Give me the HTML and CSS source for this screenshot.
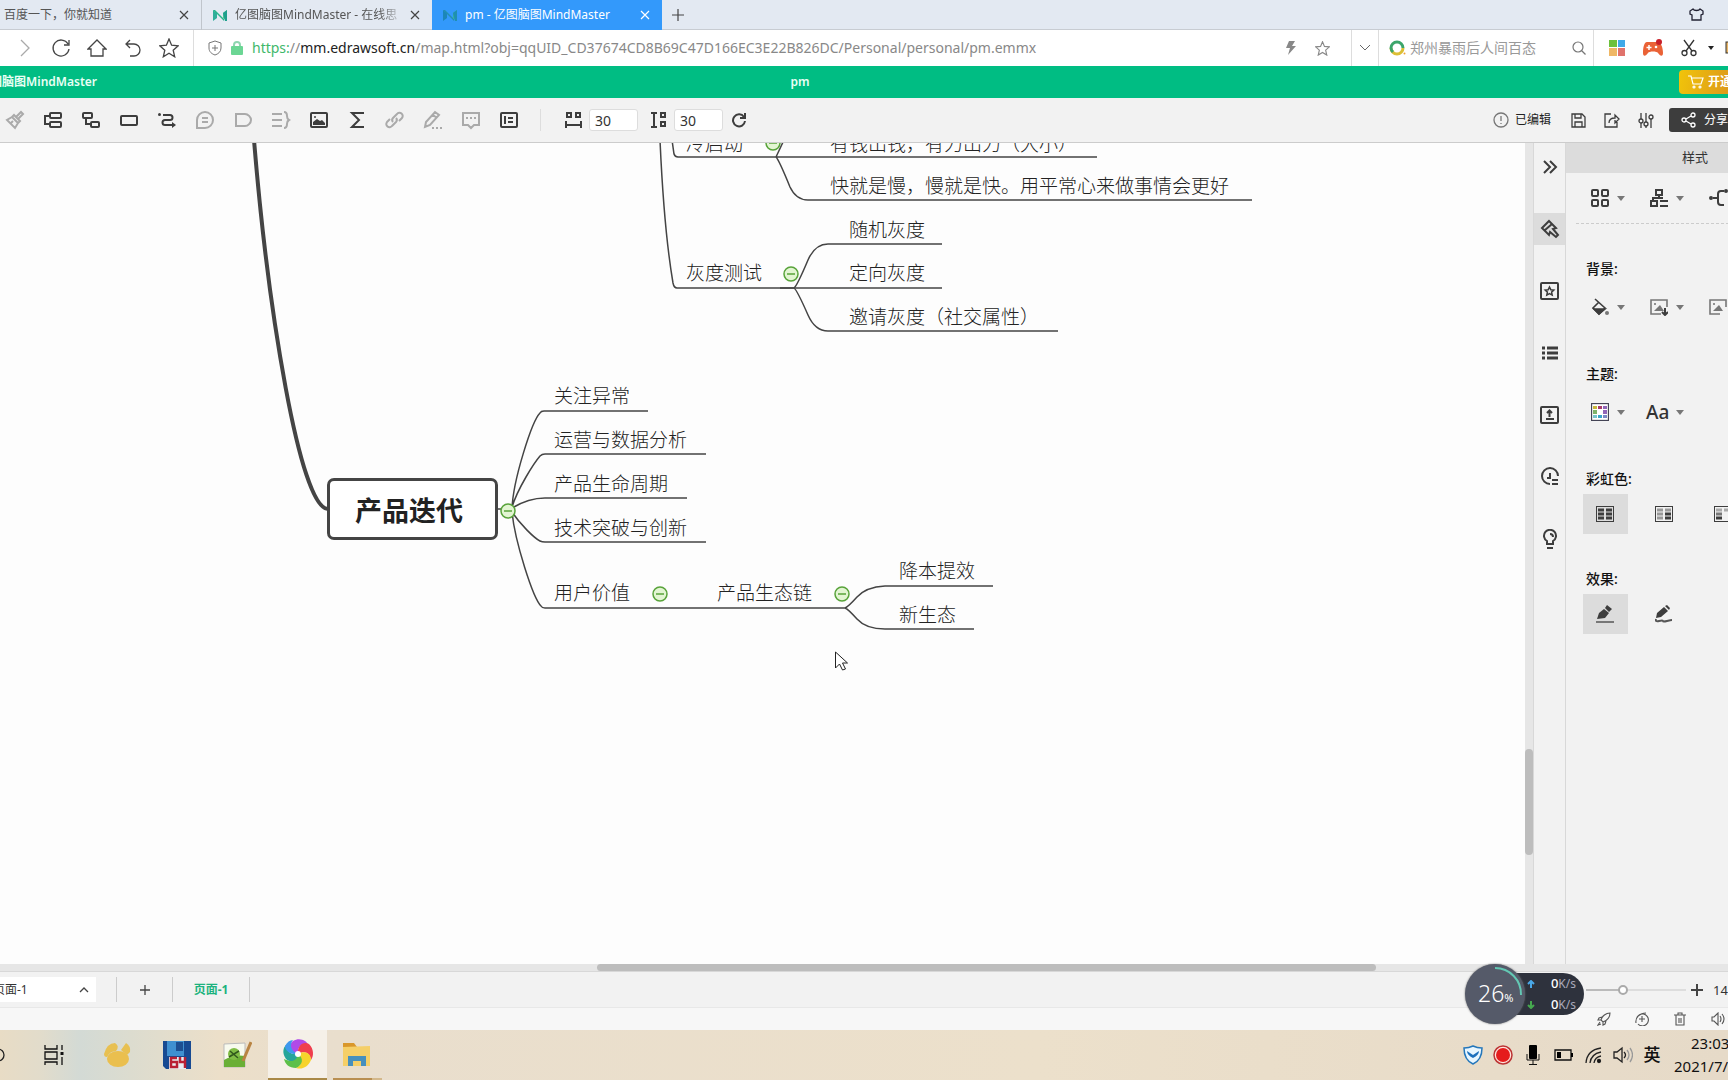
FILE: index.html
```html
<!DOCTYPE html>
<html lang="zh-CN">
<head>
<meta charset="utf-8">
<title>pm - 亿图脑图MindMaster</title>
<link rel="stylesheet" href="styles.css">
</head>
<body>
<div class="app">
  <nav class="tabs" aria-label="标签页">
    <div class="tab tab-first"><a href="#baidu">百度一下，你就知道</a><button class="close" aria-label="关闭"><svg width="10" height="10"><path d="M1 1l8 8M9 1l-8 8"/></svg></button></div>
    <div class="tab"><svg class="logo" width="14" height="13" viewBox="0 0 14 13"><path d="M0 1l4 3v5l-4 3z" fill="#2fae9a"/><path d="M0 1h2l9 9v2z" fill="#25b58a"/><path d="M14 1l-4 3v5l4 3z" fill="#4cc98f"/><path d="M10 4l4-3v11h-2z" fill="#1f9f8d"/></svg><a class="fade" href="#mm">亿图脑图MindMaster - 在线思</a><button class="close" aria-label="关闭"><svg width="10" height="10"><path d="M1 1l8 8M9 1l-8 8"/></svg></button></div>
    <div class="tab active"><svg class="logo" width="14" height="13" viewBox="0 0 14 13"><path d="M0 1l4 3v5l-4 3z" fill="#1c86b8"/><path d="M0 1h2l9 9v2z" fill="#2390b0"/><path d="M14 1l-4 3v5l4 3z" fill="#35b49a"/><path d="M10 4l4-3v11h-2z" fill="#1f8fb0"/></svg><a href="#pm">pm - 亿图脑图MindMaster</a><button class="close" aria-label="关闭"><svg width="10" height="10"><path d="M1 1l8 8M9 1l-8 8"/></svg></button></div>
    <button class="newtab" aria-label="新标签页"><svg width="14" height="14"><path d="M7 1v12M1 7h12"/></svg></button>
    <button class="skin" aria-label="皮肤"><svg width="15" height="13"><path d="M4 1L1 3v3l2 1v5h9V7l2-1V3l-3-2c-1 2-6 2-7 0z" fill="none" stroke="#223" stroke-width="1.3"/></svg></button>
  </nav>

  <div class="address">
    <div class="navs">
      <button aria-label="前进"><svg width="18" height="18"><path d="M5 1l8 8-8 8"/></svg></button>
      <button aria-label="刷新"><svg width="20" height="20"><path d="M17 6a8 8 0 1 0 1 5M18 2v5h-5"/></svg></button>
      <button aria-label="主页"><svg width="20" height="20"><path d="M1 11l9-9 9 9h-3v7H4v-7z"/></svg></button>
      <button aria-label="恢复"><svg width="18" height="20"><path d="M6 2L2 6l4 4M2 6h8a6 6 0 0 1 0 12H6"/></svg></button>
      <button aria-label="收藏"><svg width="20" height="20"><path d="M10 1l2.600 6.200 6.600.600-5 4.400 1.500 6.600L10 15.300l-5.700 3.500 1.500-6.600-5-4.400 6.600-.600z"/></svg></button>
    </div>
    <div class="urlbox">
      <svg width="14" height="16" fill="none" stroke="#777"><path d="M7 1l6 2v5c0 4-3 6-6 7-3-1-6-3-6-7V3zM7 5v6M4 8h6"/></svg>
      <svg width="12" height="14"><path d="M3 6V4a3 3 0 0 1 6 0v2" fill="none" stroke="#8fd6b0" stroke-width="2"/><rect y="5" width="12" height="9" rx="1" fill="#6bd694"/></svg>
      <div class="url" role="textbox" aria-label="地址" contenteditable="true" spellcheck="false"><span class="scheme">https:</span>//<b>mm.edrawsoft.cn</b>/map.html?obj=qqUID_CD37674CD8B69C47D166EC3E22B826DC/Personal/personal/pm.emmx</div>
      <svg width="10" height="14" fill="#888"><path d="M3 0h6L6 5h4L2 14l2-7H0z"/></svg>
      <svg width="15" height="15" viewBox="0 0 20 20" fill="none" stroke="#888" stroke-width="1.500"><path d="M10 1l2.600 6.200 6.600.600-5 4.400 1.500 6.600L10 15.300l-5.700 3.500 1.500-6.600-5-4.400 6.600-.600z"/></svg>
    </div>
    <button class="drop" aria-label="展开"><svg width="12" height="8" fill="none" stroke="#666"><path d="M1 1l5 5 5-5"/></svg></button>
    <label class="search"><svg width="17" height="16" fill="none" stroke-width="3"><path d="M2 8a6 6 0 0 1 12 0" stroke="#3ba56a"/><path d="M2 8a6 6 0 0 0 12 0" stroke="#dcbf35"/><path d="M2 8a6 6 0 0 0 2 4" stroke="#3ba56a"/><circle cx="15.500" cy="13.500" r="1" fill="#f0a030" stroke="none"/></svg><input type="text" placeholder="郑州暴雨后人间百态" aria-label="搜索"><svg width="14" height="14" fill="none" stroke="#777" stroke-width="1.200"><circle cx="6" cy="6" r="5"/><path d="M9.500 9.500l4 4"/></svg></label>
    <div class="plugins">
      <button aria-label="应用"><svg width="16" height="16"><path fill="#6cc13c" d="M0 0h8v7H0z"/><path fill="#3fa9e8" d="M9 0h7v7H9z"/><path fill="#efb765" d="M0 8h8v8H0z"/><path fill="#e0736c" d="M9 8h7v8H9z"/></svg></button>
      <button aria-label="游戏"><svg width="20" height="18"><path d="M4 3h11c3 0 5 6 5 11 0 4-3 3-5 0-1-2-9-2-10 0-2 3-5 4-5 0C0 9 1 3 4 3z" fill="#ea6236"/><circle cx="16" cy="3" r="3" fill="#c8202a"/><path d="M6 6v5M3.500 8.500h5" stroke="#fff" stroke-width="1.500"/><circle cx="13" cy="8" r="1.300" fill="#fff"/></svg></button>
      <button aria-label="截图"><svg width="16" height="18" fill="none" stroke="#333" stroke-width="1.300"><circle cx="3.500" cy="14" r="2.500"/><circle cx="12.500" cy="14" r="2.500"/><path d="M3 1l8 11M13 1L5 12"/></svg></button>
      <svg class="tri" width="6" height="4"><path d="M0 0h6L3 4z" fill="#222"/></svg>
      <svg class="cut" width="8" height="14"><rect x="1" y="1" width="12" height="11" fill="#eab768" stroke="#333"/></svg>
    </div>
  </div>

  <header class="brand">
    <span class="product">亿图脑图MindMaster</span>
    <h1>pm</h1>
    <button class="vip"><svg width="16" height="14" fill="none" stroke="#fff" stroke-width="1.200"><path d="M0 1h3l2 8h8l2-6H4"/><circle cx="6" cy="12" r="1"/><circle cx="12" cy="12" r="1"/></svg>开通</button>
  </header>

  <div class="toolbar">
    <div class="tools">
      <button class="dim" aria-label="格式刷"><svg width="20" height="20"><path d="M11 7l5-5 2 2-5 5M9 5l6 6-2 2-6-6zM7 7l-5 3 8 8 3-5M6 13l2-2"/></svg></button>
      <button aria-label="同级主题"><svg width="20" height="20"><rect x="7" y="3" width="11" height="5" rx="1"/><rect x="7" y="12" width="11" height="5" rx="1"/><path d="M7 6H2v8h5"/></svg></button>
      <button aria-label="子主题"><svg width="20" height="20"><rect x="2" y="3" width="9" height="5" rx="1"/><rect x="10" y="12" width="8" height="5" rx="1"/><path d="M5 8v6h5"/></svg></button>
      <button aria-label="浮动主题"><svg width="20" height="20"><rect x="2" y="6" width="16" height="9" rx="1"/></svg></button>
      <button aria-label="关系线"><svg width="20" height="20"><path d="M6 5h7a2.500 2.500 0 0 1 0 5H8a2.500 2.500 0 0 0 0 5h7"/><circle cx="2.500" cy="4.500" r="1.500" fill="#3d3d3d" stroke="none"/><path d="M15 12l4 3-4 3z" fill="#3d3d3d" stroke="none"/></svg></button>
      <button class="dim" aria-label="注释"><svg width="20" height="20"><path d="M2 18V10a8 8 0 1 1 8 8zM7 8h6M7 12h6"/></svg></button>
      <button class="dim" aria-label="外框"><svg width="20" height="20"><path d="M3 4h9c3 0 6 3 6 6s-3 6-6 6H3z"/></svg></button>
      <button class="dim" aria-label="概要"><svg width="20" height="20"><path d="M1 4h10M1 10h10M1 16h10M13 2c3 0 3 2 3 4s0 3 2 4c-2 1-2 2-2 4s0 4-3 4"/></svg></button>
      <button aria-label="图片"><svg width="20" height="20"><rect x="2" y="3" width="16" height="14" rx="1"/><path d="M4 15v-3l4-3 3 2 2-1 3 3v2z" fill="#3d3d3d" stroke="none"/><circle cx="6" cy="7" r="1" fill="#3d3d3d" stroke="none"/></svg></button>
      <button aria-label="公式"><svg width="20" height="20"><path d="M17 3H5l7 7-7 7h12"/></svg></button>
      <button class="dim" aria-label="链接"><svg width="20" height="20"><path d="M8 12a3 3 0 0 1 0-4l4-4a3 3 0 0 1 5 4l-3 3M11 8a3 3 0 0 1 0 4l-4 4a3 3 0 0 1-5-4l3-3"/></svg></button>
      <button class="dim" aria-label="编辑"><svg width="20" height="20"><path d="M2 17l1-5 9-10 4 3-9 10zM10 5l4 3M9 18h2M13 18h2M17 18h2"/></svg></button>
      <button class="dim" aria-label="评论"><svg width="20" height="20"><path d="M2 3h16v12h-5l-3 3-3-3H2zM5 8h2M9 8h2M13 8h2"/></svg></button>
      <button aria-label="任务"><svg width="20" height="20"><rect x="2" y="3" width="16" height="14" rx="1"/><path d="M6 6v8M9 8h5M9 12h5"/></svg></button>
    </div>
    <div class="spacing">
      <label><svg width="18" height="18"><path d="M2 2h4v4H2zM11 2h4v4h-4zM1 10v7M16 10v7M1 14h15"/></svg><input type="text" value="30" aria-label="水平间距"></label>
      <label><svg width="18" height="18"><path d="M1 2h6M1 16h6M4 2v14M11 2h4v4h-4zM11 11h4v4h-4z"/></svg><input type="text" value="30" aria-label="垂直间距"></label>
      <button aria-label="重置"><svg width="16" height="16"><path d="M13 5a6 6 0 1 0 1 4M14 1v5H9"/></svg></button>
    </div>
    <div class="actions">
      <span class="edited"><svg width="16" height="16"><circle cx="8" cy="8" r="7"/><path d="M8 4v5M8 11v1"/></svg>已编辑</span>
      <button aria-label="保存"><svg width="15" height="15"><path d="M1 1h10l3 3v10H1zM4 1v4h6V1M4 14V9h7v5"/></svg></button>
      <button aria-label="导出"><svg width="16" height="15"><path d="M7 1H1v13h12V9M5 10c0-4 3-5 6-5V2l4 4-4 4V7"/></svg></button>
      <button aria-label="设置"><svg width="16" height="15"><path d="M3 0v6M3 10v5M8 0v9M8 13v2M13 6v9"/><circle cx="3" cy="8" r="2"/><circle cx="8" cy="11" r="2"/><circle cx="13" cy="4" r="2"/></svg></button>
      <button class="share"><svg width="16" height="16"><circle cx="3" cy="8" r="2"/><circle cx="12" cy="3" r="2"/><circle cx="12" cy="13" r="2"/><path d="M5 7l5-3M5 9l5 3"/></svg>分享</button>
    </div>
  </div>

  <main class="work">
    <section class="canvas" aria-label="思维导图">
      <svg class="links" width="1400" height="800" viewBox="0 143 1400 800">
        <g fill="none" stroke="#444" stroke-width="1.500">
          <path d="M254 140C268 310 300 509 328 509" stroke-width="4"/>
          <path d="M660 140Q664 230 673 283Q674 288 677 288H942M672 140L674 154Q675 157 678 157H1097M784 140L776 157Q779 160 790 187Q796 200 808 200H1252"/>
          <path d="M780 288H794Q797 286 808 260Q815 244 828 244H942M794 288Q797 290 808 315Q815 331 828 331H1058"/>
          <path d="M497 509H512C513 480 532 421 540 413Q541 411 544 411H648M512 507C518 488 534 463 540 456Q542 454 545 454H706M512 508C522 502 535 498 545 498H687M512 512C520 524 534 538 540 541Q542 542 545 542H706M512 512C515 542 533 598 541 606Q542 608 545 608H845M830 608H845Q848 607 857 597T885 586H993M845 608Q848 609 857 619T885 629H974"/>
        </g>
        <g fill="#e2f5d2" stroke="#58a33a" stroke-width="1.500">
          <circle cx="773" cy="143" r="7"/><path d="M769 143h8"/>
          <circle cx="791" cy="274" r="7"/><path d="M787 274h8"/>
          <circle cx="508" cy="511" r="7"/><path d="M504 511h8"/>
          <circle cx="660" cy="594" r="7"/><path d="M656 594h8"/>
          <circle cx="842" cy="594" r="7"/><path d="M838 594h8"/>
        </g>
        <path d="M835.500 652v16l4-4 3 6 3-1-3-6h5z" fill="#fff" stroke="#222"/>
      </svg>
      <div class="node" style="left:686px;top:-14px">冷启动</div>
      <div class="node" style="left:830px;top:-14px">有钱出钱，有力出力（大小）</div>
      <div class="node" style="left:830px;top:28px">快就是慢，慢就是快。用平常心来做事情会更好</div>
      <div class="node" style="left:849px;top:72px">随机灰度</div>
      <div class="node" style="left:686px;top:115px">灰度测试</div>
      <div class="node" style="left:849px;top:115px">定向灰度</div>
      <div class="node" style="left:849px;top:159px">邀请灰度（社交属性）</div>
      <div class="topic" style="left:327px;top:335px">产品迭代</div>
      <div class="node" style="left:554px;top:238px">关注异常</div>
      <div class="node" style="left:554px;top:282px">运营与数据分析</div>
      <div class="node" style="left:554px;top:326px">产品生命周期</div>
      <div class="node" style="left:554px;top:370px">技术突破与创新</div>
      <div class="node" style="left:554px;top:435px">用户价值</div>
      <div class="node" style="left:717px;top:435px">产品生态链</div>
      <div class="node" style="left:899px;top:413px">降本提效</div>
      <div class="node" style="left:899px;top:457px">新生态</div>
    </section>
    <div class="vscroll"><div class="thumb"></div></div>
    <nav class="rail" aria-label="面板">
      <button aria-label="收起"><svg width="18" height="16"><path d="M3 2l6 6-6 6M9 2l6 6-6 6"/></svg></button>
      <button class="on" aria-label="样式"><svg width="20" height="20"><path d="M9 2l7 7-3 1 5 6-2 2-6-5-1 3-7-7zM5 11l7-6"/></svg></button>
      <button aria-label="图标"><svg width="20" height="20"><rect x="1" y="2" width="17" height="16" rx="1"/><path d="M9.500 6l1.300 2.700 3 .400-2.200 2 .600 3-2.700-1.500-2.700 1.500.600-3-2.200-2 3-.400z" stroke-width="1.500"/></svg></button>
      <button aria-label="大纲"><svg class="bold" width="18" height="16"><path d="M1 3h3M1 8h3M1 13h3M6 3h11M6 8h11M6 13h11"/></svg></button>
      <button aria-label="附件"><svg width="20" height="20"><rect x="1" y="2" width="17" height="16" rx="1"/><path d="M9.500 12V6M7 8l2.500-2.500L12 8M6 14h8"/></svg></button>
      <button aria-label="历史"><svg width="20" height="20"><path d="M10 17a8 8 0 1 1 8-8M10 6v5H7M12 13h6M12 17h6"/></svg></button>
      <button aria-label="提示"><svg width="18" height="20"><path d="M6 15v-3a6 6 0 1 1 6 0v3zM6 19h6M9 5q3 0 3 3"/></svg></button>
    </nav>
    <aside class="panel">
      <h2>样式</h2>
      <div class="layouts row">
        <button aria-label="布局"><svg width="18" height="18"><rect x="1" y="1" width="6" height="6" rx="1"/><rect x="11" y="1" width="6" height="6" rx="1"/><rect x="1" y="11" width="6" height="6" rx="1"/><rect x="11" y="11" width="6" height="6" rx="1"/></svg><i></i></button>
        <button aria-label="结构"><svg width="18" height="18"><path d="M6 1h6v5H6zM9 6v3M3 13V9h10M1 12h6v5H1zM10 12h8M10 17h8"/></svg><i></i></button>
        <button aria-label="连线"><svg width="20" height="18"><path d="M4 9h5M15 2h-3q-3 0-3 3v8q0 3 3 3h3"/><circle cx="2" cy="9" r="1"/><circle cx="17" cy="2" r="1"/></svg></button>
      </div>
      <section><h3>背景:</h3><div class="row">
        <button aria-label="背景颜色"><svg class="thin" width="18" height="18"><path d="M4 1l10 9-6 6-6-6 6-6"/><path d="M3 11h11l-6 5z" fill="#3d3d3d"/><circle cx="16" cy="15" r="2" fill="#777" stroke="none"/></svg><i></i></button>
        <button aria-label="背景图片"><svg class="thin" width="18" height="18"><path d="M11 16H1V2h16v7" stroke="#777"/><path d="M4 13l6-6 4 6z" fill="#777" stroke="none"/><path d="M5 5v2" stroke="#777"/><path d="M15 10v7M12 14l3 3 3-3" stroke-width="2"/></svg><i></i></button>
        <button aria-label="移除图片"><svg class="thin" width="18" height="18"><path d="M11 16H1V2h16v7" stroke="#777"/><path d="M4 13l6-6 4 6z" fill="#777" stroke="none"/><path d="M5 5v2" stroke="#777"/></svg></button>
      </div></section>
      <section><h3>主题:</h3><div class="row">
        <button aria-label="主题颜色"><svg width="18" height="18"><rect x=".5" y=".5" width="17" height="17" fill="#fff" stroke="#445" stroke-width="1.300"/><g stroke="none"><path fill="#c9b83b" d="M2 3h4v3H2z"/><path fill="#a83c6a" d="M7 3h4v3H7z"/><path fill="#9065b8" d="M12 3h4v3h-4zM12 7h4v4h-4z"/><path fill="#7fb36a" d="M2 7h4v4H2z"/><path fill="#76c5ca" d="M2 12h4v3H2z"/><path fill="#3aa5c8" d="M7 12h4v3H7z"/><path fill="#7d87c5" d="M12 12h4v3h-4z"/></g></svg><i></i></button>
        <button class="aa" aria-label="主题字体"><span>Aa</span><i></i></button>
      </div></section>
      <section class="tight"><h3>彩虹色:</h3><div class="row swatches">
        <button class="on" aria-label="单色"><svg class="bold" width="18" height="16"><rect x=".5" y=".5" width="17" height="15" stroke-width="1"/><path d="M2 4h6M10 4h6M2 8h6M10 8h6M2 12h6M10 12h6"/></svg></button>
        <button aria-label="多色"><svg class="bold" width="18" height="16"><rect x=".5" y=".5" width="17" height="15" stroke-width="1"/><path d="M2 4h6M10 4h6M2 8h6M2 12h6" stroke="#999"/><path d="M10 8h6M10 12h6"/></svg></button>
        <button aria-label="渐变"><svg class="bold" width="18" height="16"><rect x=".5" y=".5" width="17" height="15" stroke-width="1"/><path d="M2 4h6M10 4h6" stroke="#aaa"/><path d="M2 8h6" stroke="#777"/><path d="M2 12h6"/></svg></button>
      </div></section>
      <section class="tight"><h3>效果:</h3><div class="row swatches">
        <button class="on" aria-label="普通"><svg width="18" height="18"><path d="M1 14l2-6 5-4 5 4-4 5zM9 3l2-3 5 4-3 3z" fill="#3d3d3d" stroke="none"/><path d="M0 17h18" stroke="#777"/></svg></button>
        <button aria-label="手绘"><svg width="18" height="18"><path d="M1 13l1-5 7-6 4 4-7 6zM10 1l2-1 3 3-1 2z" fill="#3d3d3d" stroke="none"/><path d="M1 14q-1 3 3 2t4 0 4 0 5-1" stroke="#555"/></svg></button>
      </div></section>
    </aside>
  </main>
  <div class="hscroll"><div class="thumb"></div></div>

  <div class="pages">
    <button class="picker"><span>页面-1</span><svg width="10" height="6" fill="none" stroke="#444" stroke-width="1.300"><path d="M1 5l4-4 4 4"/></svg></button>
    <button class="add" aria-label="添加页面"><svg width="12" height="12" stroke="#444" stroke-width="1.300"><path d="M6 1v10M1 6h10"/></svg></button>
    <button class="page">页面-1</button>
    <div class="zoom"><input type="range" min="0" max="100" value="36" aria-label="缩放"><button aria-label="放大"><svg width="12" height="12" stroke="#444" stroke-width="2"><path d="M6 0v12M0 6h12"/></svg></button><span>14</span></div>
  </div>
  <div class="status">
    <button aria-label="加速"><svg width="14" height="14"><path d="M4 8C5 4 9 1 13 1c0 4-3 8-7 9zM5 5L2 6 1 8h3M9 9l-1 3-2 1V10M3 10l-2 3 3-1"/></svg></button>
    <button aria-label="浏览器医生"><svg width="14" height="14"><path d="M1 11C0 5 5 1 11 1M3 12a6 6 0 1 0 1-9M7 4v6M4 7h6"/></svg></button>
    <button aria-label="清理"><svg width="12" height="14"><path d="M0 3h12M4 3V1h4v2M2 3v10h8V3M5 6v5M7 6v5"/></svg></button>
    <button aria-label="声音"><svg width="14" height="14"><path d="M1 5v4h2l4 4V1L3 5zM9 4q2 3 0 6M11 2q4 5 0 10"/></svg></button>
  </div>

  <footer class="taskbar">
    <button class="edge" aria-label="搜索"><svg width="5" height="14"><circle cx="-2" cy="7" r="6" fill="none" stroke="#222" stroke-width="1.300"/></svg></button>
    <button class="views" aria-label="任务视图"><svg width="20" height="20" fill="none" stroke="#111" stroke-width="1.300"><path d="M1 0v4h12V0M1 7h12v7H1zM1 20v-3h12v3M18 0v5M18 12v8"/><path d="M16.500 7h3v3h-3z" fill="#111" stroke="none"/></svg></button>
    <button aria-label="脚印"><svg width="28" height="26"><ellipse cx="15" cy="17" rx="11" ry="8" fill="#eabf4e"/><path d="M1 12Q4 1 12 1q5 3 1 8-6 0-9 6-3 0-3-3zM18 8l5-7q5 3 4 9l-3 3z" fill="#e8c051"/></svg></button>
    <button aria-label="磁盘"><svg width="30" height="30"><path d="M1 1h28v28H4l-3-3z" fill="#174a92"/><path d="M5 1h17v15H5z" fill="#3f90d0"/><path d="M14 2h7v9h-7z" fill="#1d4f91"/><path d="M7 17h17v12H7z" fill="#e9edf2"/><path d="M15 18H9v9h6v-5H9M18 17v5h5M23 17v11" fill="none" stroke="#b92034" stroke-width="2.500"/></svg></button>
    <button aria-label="记事本"><svg width="30" height="28"><path d="M2 3l21-1v24H2z" fill="#f8faee" stroke="#bbb"/><path d="M2 19q10-6 21-4v11H2z" fill="#6aaf36"/><circle cx="12" cy="13" r="6" fill="#80bd45"/><path d="M7 16l10-6M8 10l8 7" stroke="#31591d" stroke-width="1.500"/><path d="M29 1L21 20" stroke="#b98443" stroke-width="3"/></svg></button>
    <button class="current" aria-label="浏览器"><svg width="32" height="32" viewBox="-16 -16 32 32"><g id="petals"><path fill="#b04ae8" d="M0 0C-9-2-10-9-5-13 2-17 9-13 10-9 4-11-1-7 0 0z"/><path fill="#ef3e4e" d="M0 0C-1-8 5-13 11-10 16-5 16 2 13 6 12-1 7-4 0 0z"/><path fill="#f6d32b" d="M0 0C7-4 13-1 13 6 10 13 4 16-2 14 5 11 4 5 0 0z"/><path fill="#5cc04a" d="M0 0c6 4 5 11-2 14-7 0-11-4-12-9 5 3 11 1 12-5z"/><path fill="#26a59a" d="M0 0c-1 7-7 9-12 5-4-6-3-11 0-14 0 6 5 10 12 9z"/><path fill="#3e98ed" d="M0 0c-7 1-13-3-13-8 2-4 5-6 8-6-4 5-2 11 5 14z"/></g><circle r="3" fill="#fff"/></svg></button>
    <button class="opened" aria-label="文件资源管理器"><svg width="30" height="26"><path d="M1 1h11l3 4H1z" fill="#d9972b"/><path d="M1 5l27-1v20H1z" fill="#f5cf68"/><path d="M6 24V14h18v10h-5v-5h-8v5z" fill="#4790bd"/></svg></button>
    <div class="tray">
      <button aria-label="安全"><svg width="20" height="20"><path d="M1 3q5 0 9-2 4 2 9 2 0 12-9 16Q1 15 1 3z" fill="#e8f6ff" stroke="#2477bb" stroke-width="1.500"/><path d="M4 6l6 4 6-4q0 4-6 7-6-3-6-7z" fill="#1d70bd"/></svg></button>
      <button aria-label="录制"><svg width="20" height="20"><circle cx="10" cy="10" r="9" fill="#ffe4dc" stroke="#b33" stroke-width="1.500"/><circle cx="10" cy="10" r="7" fill="#e51c1c"/></svg></button>
      <button aria-label="麦克风"><svg width="14" height="20"><rect x="3" width="8" height="14" rx="1"/><path d="M1 9v6h12V9M7 15v4M3 19.500h8" fill="none" stroke="#111"/></svg></button>
      <button aria-label="电池"><svg width="19" height="12"><path d="M1 1h16v10H1z" fill="none" stroke="#111" stroke-width="1.300"/><path d="M3 3h4v6H3zM17 4h2v4h-2z"/></svg></button>
      <button aria-label="网络"><svg width="17" height="17" fill="none" stroke="#222" stroke-width="1.300"><path d="M1 16Q2 3 16 1M5 16Q6 7 16 5M9 16q1-6 7-7"/><circle cx="14" cy="14" r="1.500" fill="#111"/></svg></button>
      <button aria-label="音量"><svg width="20" height="18" fill="none" stroke="#222" stroke-width="1.300"><path d="M1 6v6h3l5 4V2L4 6zM11 6q3 3 0 6"/><path d="M14 4q4 5 0 10M17 2q5 7 0 14" stroke="#999"/></svg></button>
      <button class="ime">英</button>
      <div class="clock"><span class="time">23:03</span><span>2021/7/</span></div>
    </div>
  </footer>
</div>
<div class="monitor">
  <div class="rates"><p><svg width="8" height="8" fill="none" stroke="#4aa8e8" stroke-width="2"><path d="M4 8V1M1 4l3-3 3 3"/></svg><b>0</b>K/s</p><p><svg width="8" height="8" fill="none" stroke="#46a84f" stroke-width="2"><path d="M4 0v7M1 4l3 3 3-3"/></svg><b>0</b>K/s</p></div>
  <div class="load"><svg width="60" height="60"><path d="M30 4A26 26 0 0 1 56 31" fill="none" stroke="#63c8b4" stroke-width="2"/></svg><strong>26</strong><small>%</small></div>
</div>
</body>
</html>
```
FILE: styles.css
```css
* { box-sizing: border-box; }
body {
  margin: 0;
  overflow: hidden;
  font: 12px/18px "Noto Sans", "Noto Sans CJK SC", sans-serif;
  color: #333;
}
button {
  display: flex;
  align-items: center;
  justify-content: center;
  flex: none;
  margin: 0;
  padding: 0;
  border: 0;
  background: none;
  color: inherit;
  font: inherit;
  white-space: nowrap;
}
svg { flex: none; display: block; }
input { font: inherit; color: inherit; }
a { color: inherit; text-decoration: none; }
h1, h2, h3, p { margin: 0; font: inherit; }
.app { display: flex; flex-direction: column; height: 100vh; }

/* browser tabs */
.tabs { display: flex; flex: none; height: 30px; background: #e3e9f2; border-bottom: 1px solid #c8ccd2; }
.tab { display: flex; align-items: center; width: 230px; height: 30px; padding: 0 12px 0 11px; color: #555; white-space: nowrap; }
.tab a { flex: 1; overflow: hidden; }
.tab-first { width: 202px; padding-left: 4px; border-right: 1px solid #c0c5cc; }
.tab .logo { margin-right: 8px; }
.tab .fade { margin-right: 5px; -webkit-mask-image: linear-gradient(90deg, #000 85%, transparent); mask-image: linear-gradient(90deg, #000 85%, transparent); }
.tab.active { background: #3399fb; color: #fff; }
.close svg, .newtab svg { fill: none; stroke: #444; stroke-width: 1.2; }
.active .close svg { stroke: #fff; }
.newtab { width: 32px; }
.skin { margin-left: auto; width: 64px; }

/* address bar */
.address { display: flex; flex: none; height: 36px; background: #fff; }
.navs { display: flex; padding: 0 6px 0 7px; border-right: 1px solid #ddd; }
.navs button { width: 36px; }
.navs svg { fill: none; stroke: #444; stroke-width: 1.3; }
.navs button:first-child svg { stroke: #aaa; }
.urlbox { display: flex; flex: 1; align-items: center; padding: 0 21px 0 14px; gap: 9px; min-width: 0; }
.url { flex: 1; min-width: 0; overflow: hidden; white-space: nowrap; font-size: 14px; line-height: 24px; color: #888; }
.urlbox svg:last-child { margin-left: 10px; }
.url b { font-weight: 400; color: #222; }
.scheme { color: #3fb86b; }
.drop { width: 28px; border-left: 1px solid #ddd; border-right: 1px solid #ddd; }
.search { display: flex; align-items: center; width: 215px; padding: 0 7px 0 10px; border-right: 1px solid #ddd; gap: 4px; }
.search input { flex: 1; min-width: 0; border: 0; padding: 0; font-size: 14px; background: none; }
.search input::placeholder { color: #999; }
.plugins { display: flex; align-items: center; width: 134px; overflow: hidden; padding-left: 13px; }
.plugins button { width: 20px; margin-right: 16px; }
.plugins button:nth-child(3) { margin-right: 9px; }
.cut { margin-left: 11px; }

/* product bar */
.brand { display: flex; align-items: center; flex: none; height: 32px; background: #00bd83; color: #e9fff5; font-weight: 600; white-space: nowrap; }
.product { display: flex; justify-content: flex-end; width: 97px; }
.vip { height: 24px; width: 49px; justify-content: flex-start; gap: 4px; padding-left: 9px; overflow: hidden; border-radius: 4px 0 0 4px; background: linear-gradient(100deg, #f1c40a, #dd9a1a); color: #fff; }
.brand h1 { flex: 1; padding-right: 176px; text-align: center; font-weight: 600; }

/* tool bar */
.toolbar { display: flex; align-items: center; flex: none; height: 45px; background: #f2f2f2; border-bottom: 1px solid #ccc; }
.toolbar svg { fill: none; stroke: #3d3d3d; stroke-width: 2; }
.tools { display: flex; margin-left: -4px; }
.tools button { width: 38px; height: 30px; }
.tools .dim svg { stroke: #aaa; }
.spacing { display: flex; align-items: center; gap: 12px; margin-left: 12px; padding-left: 24px; border-left: 1px solid #ddd; }
.spacing label { display: flex; align-items: center; gap: 6px; }
.spacing input { width: 49px; height: 22px; padding: 0 5px; border: 1px solid #ddd; border-radius: 3px; background: #fff; font-size: 14px; }
.spacing button { margin-left: -4px; }
.actions { display: flex; align-items: center; margin-left: auto; }
.actions button { width: 34px; }
.toolbar .actions svg { stroke-width: 1.3; }
.edited { display: flex; align-items: center; gap: 6px; margin-right: 10px; color: #222; }
.toolbar .edited svg { stroke: #777; }
.actions .share { width: 59px; height: 24px; margin-left: 6px; justify-content: flex-start; gap: 7px; padding-left: 12px; overflow: hidden; border-radius: 3px 0 0 3px; background: #3d3d3d; color: #fff; }
.toolbar .share svg { stroke: #fff; }

/* work area */
.work { display: flex; flex: 1; min-height: 0; overflow: hidden; background: #f2f2f2; }
.canvas { position: relative; flex: 1; min-width: 0; overflow: hidden; background: #fdfdfd; }
.links { position: absolute; left: 0; top: 0; }
.node, .topic { position: absolute; white-space: nowrap; font-family: "Noto Sans CJK SC", sans-serif; color: #222; }
.node { font-size: 19px; line-height: 28px; font-weight: 300; }
.topic { width: 171px; padding: 12px 0 10px 25px; border: 3px solid #444; border-radius: 7px; background: #fff; font-size: 27px; line-height: 34px; font-weight: 700; }
.vscroll { width: 9px; padding: 606px 1px 0 0; background: #e6e6e6; border-right: 1px solid #d8d8d8; }
.vscroll .thumb { width: 8px; height: 106px; border-radius: 4px; background: #bdbdbd; }
.hscroll { flex: none; height: 8px; padding: 0 352px 0 597px; background: #e6e6e6; border-bottom: 1px solid #d8d8d8; }
.hscroll .thumb { height: 7px; border-radius: 4px; background: #bdbdbd; }
.rail { display: flex; flex-direction: column; gap: 30px; width: 32px; padding-top: 8px; border-right: 1px solid #d8d8d8; }
.rail button { width: 31px; height: 32px; }
.rail svg { fill: none; stroke: #3d3d3d; stroke-width: 2; }
.on { background: #dcdcdc; }

/* style panel */
.panel { width: 162px; overflow: hidden; }
.panel h2 { width: 258px; height: 30px; background: #dcdcdc; font-size: 13px; line-height: 28px; text-align: center; }
.row { display: flex; align-items: center; gap: 14px; }
.row svg { fill: none; stroke: #3d3d3d; stroke-width: 2; }
.rail .bold, .row .bold { stroke-width: 3; }
.row .thin { stroke-width: 1.6; }
.row button { width: 45px; height: 40px; gap: 8px; justify-content: flex-start; padding-left: 8px; }
.row i { width: 0; border: 4px solid transparent; border-top: 5px solid #777; border-bottom: 0; }
.layouts { height: 51px; width: 258px; margin-left: 10px; padding-left: 7px; border-bottom: 1px dashed #ccc; }
.panel section { margin: 0 0 37px 17px; }
.panel .layouts + section { margin-top: 35px; }
.panel h3 { margin: 0 0 8px 3px; color: #111; font-size: 14px; line-height: 20px; font-weight: 500; }
.panel .tight { margin-bottom: 35px; }
.panel .tight h3 { margin-bottom: 5px; }
.row .aa { padding-left: 4px; gap: 7px; font-size: 19px; font-weight: 500; }
.swatches button { padding-left: 13px; }

/* page strip */
.pages { display: flex; align-items: center; flex: none; height: 36px; background: #f2f2f2; border-bottom: 1px solid #e8e8e8; }
.picker { justify-content: space-between; width: 106px; height: 25px; margin-left: -10px; padding: 0 7px 0 3px; background: #fff; }
.add, .page { height: 25px; border-left: 1px solid #ccc; }
.add { width: 56px; margin-left: 20px; }
.page { width: 78px; border-right: 1px solid #ccc; color: #1cb27e; font-weight: 700; }
.zoom { display: flex; align-items: center; gap: 5px; margin-left: auto; width: 142px; overflow: hidden; font-size: 13px; }
.zoom input { -webkit-appearance: none; appearance: none; width: 100px; height: 12px; margin: 0; background: linear-gradient(90deg, #bbb 36%, #ddd 36%) center / 100% 2px no-repeat; }
.zoom input::-webkit-slider-thumb { -webkit-appearance: none; width: 10px; height: 10px; border: 2px solid #aaa; border-radius: 50%; background: #fff; }
.zoom span { margin-left: 5px; }
.status { display: flex; justify-content: flex-end; align-items: center; flex: none; gap: 24px; height: 22px; padding-right: 3px; background: #f7f7f7; }
.status button { width: 14px; }
.status svg { fill: none; stroke: #555; stroke-width: 1.1; }

/* desktop task bar */
.taskbar { display: flex; flex: none; height: 50px; background: linear-gradient(90deg, #e8dcc5 0, #e2dccb 40px, #d3dad5 80px, #dcdccf 130px, #ecdfc9 220px, #e9decd 330px, #ece0cb 60%, #e6dac8); }
.taskbar > button { width: 60px; height: 50px; }
.taskbar > .edge { width: 24px; justify-content: flex-start; }
.taskbar > .views { margin-right: 3px; }
.taskbar > .current { width: 59px; margin-left: 1px; background: #f5f0e8; border-bottom: 2px solid #a98948; }
.taskbar > .opened { background: linear-gradient(90deg, #b98f51 39px, #d3b88b 39px) 6px 100% / 49px 2px no-repeat; }
.tray { display: flex; align-items: center; margin-left: auto; width: 265px; overflow: hidden; }
.tray button { width: 20px; margin-right: 10px; }
.tray .ime { width: 18px; margin-right: 13px; font-size: 17px; font-weight: 500; color: #111; }
.clock { flex: none; font-size: 15px; line-height: 23px; color: #111; white-space: nowrap; }
.clock span { display: block; }
.clock .time { text-align: right; padding-left: 17px; }

/* floating resource monitor */
.monitor { position: absolute; right: 144px; bottom: 56px; width: 119px; height: 60px; }
.rates { position: absolute; right: 0; top: 9px; width: 90px; height: 42px; padding: 0 8px 0 33px; border-radius: 0 21px 21px 0; background: #2e323d; color: #aab; }
.rates p { display: flex; align-items: center; line-height: 21px; }
.rates b { margin-left: auto; color: #fff; font-weight: 500; font-size: 13px; }
.load { position: absolute; left: 0; top: 0; display: flex; align-items: baseline; width: 60px; padding-left: 13px; height: 60px; border-radius: 50%; background: #555a69; box-shadow: 0 0 2px #666; color: #fff; line-height: 58px; }
.load svg { position: absolute; left: 0; top: 0; }
.load strong { font-size: 23px; font-weight: 300; }
.load small { font-size: 11px; }
```
